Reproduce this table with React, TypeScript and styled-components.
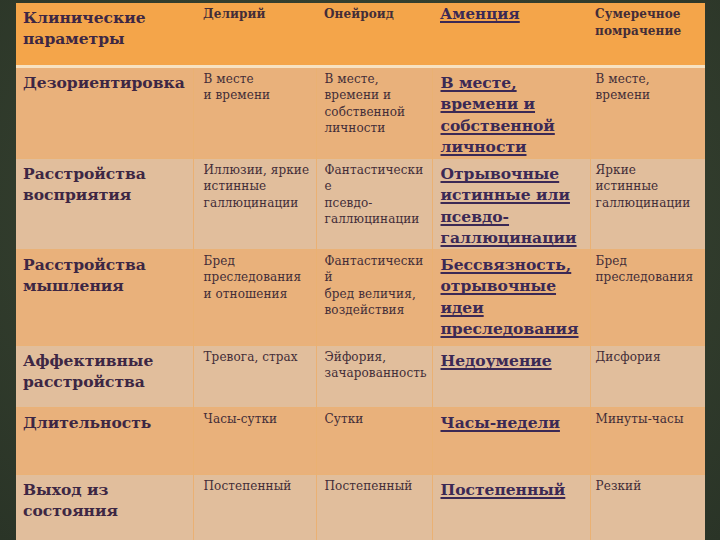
import { Fragment } from "react";
import { createGlobalStyle, styled } from "styled-components";

const GlobalStyle = createGlobalStyle`
  html, body {
    margin: 0;
    padding: 0;
  }
  body {
    width: 720px;
    height: 540px;
    overflow: hidden;
    background: radial-gradient(ellipse at 50% 40%, #3b4634 0%, #323d2d 60%, #2a3427 100%);
  }
`;

const Page = styled.div`
  width: 720px;
  height: 540px;
  box-sizing: border-box;
  padding: 3px 15px 0 16px;
  overflow: hidden;
`;

const Table = styled.table`
  width: 689px;
  table-layout: fixed;
  border-collapse: collapse;
  border-spacing: 0;
  font-family: "DejaVu Serif", "Liberation Serif", serif;
`;

const HeaderRow = styled.tr`
  height: 63px;
  background: #f4a54a;
  border-bottom: 3px solid #f7e2c2;
`;

const Row = styled.tr<{ $tone: "orange" | "beige"; $h: number }>`
  height: ${(p) => p.$h}px;
  background: ${(p) => (p.$tone === "orange" ? "#e9b17b" : "#e1be9c")};
  border-top: 1px solid #eab277;
`;

const Cell = styled.td<{ $kind: "param" | "plain" | "accent"; $pl: number; $head?: boolean }>`
  vertical-align: top;
  box-sizing: border-box;
  padding: ${(p) => (p.$kind === "plain" ? "3px" : "4px")} 2px 0 ${(p) => p.$pl}px;
  border-left: ${(p) => (p.$head ? "none" : "1px solid #eab173")};
  white-space: nowrap;
  overflow: hidden;
  color: ${(p) => (p.$kind === "accent" ? "#3b2955" : p.$kind === "param" ? "#3d2744" : "#432d38")};
  font-size: ${(p) => (p.$kind === "plain" ? "12px" : p.$kind === "param" ? "15.5px" : "15.5px")};
  font-weight: ${(p) => (p.$kind === "plain" ? (p.$head ? 600 : 400) : 700)};
  line-height: ${(p) => (p.$kind === "plain" ? "16.5px" : p.$kind === "param" ? "21px" : "21.5px")};
  text-decoration: ${(p) => (p.$kind === "accent" ? "underline" : "none")};
  text-decoration-thickness: 2px;
  text-underline-offset: 2px;
  text-decoration-skip-ink: none;
  letter-spacing: ${(p) => (p.$kind === "plain" ? "0.1px" : "0")};

  &:first-child {
    border-left: none;
  }
`;

const HeadAccent = styled.span`
  font-size: 15px;
  font-weight: 700;
  text-decoration: underline;
  text-decoration-thickness: 1.5px;
  text-underline-offset: 2px;
  text-decoration-skip-ink: none;
  color: #3b2955;
`;

const widths = [177, 123, 116, 158, 115];
const pads = [7, 10, 8, 8, 5];

type Line = string[];

const rows: { h: number; tone: "orange" | "beige"; cells: Line[] }[] = [
  {
    h: 92,
    tone: "orange",
    cells: [
      ["Дезориентировка"],
      ["В месте", "и времени"],
      ["В месте,", "времени и", "собственной", "личности"],
      ["В месте,", "времени и", "собственной", "личности"],
      ["В месте,", "времени"],
    ],
  },
  {
    h: 91,
    tone: "beige",
    cells: [
      ["Расстройства", "восприятия"],
      ["Иллюзии, яркие", "истинные", "галлюцинации"],
      ["Фантастически", "е", "псевдо-", "галлюцинации"],
      ["Отрывочные", "истинные или", "псевдо-", "галлюцинации"],
      ["Яркие", "истинные", "галлюцинации"],
    ],
  },
  {
    h: 96,
    tone: "orange",
    cells: [
      ["Расстройства", "мышления"],
      ["Бред", "преследования", "и отношения"],
      ["Фантастически", "й", "бред величия,", "воздействия"],
      ["Бессвязность,", "отрывочные", "идеи", "преследования"],
      ["Бред", "преследования"],
    ],
  },
  {
    h: 62,
    tone: "beige",
    cells: [
      ["Аффективные", "расстройства"],
      ["Тревога, страх"],
      ["Эйфория,", "зачарованность"],
      ["Недоумение"],
      ["Дисфория"],
    ],
  },
  {
    h: 67,
    tone: "orange",
    cells: [["Длительность"], ["Часы-сутки"], ["Сутки"], ["Часы-недели"], ["Минуты-часы"]],
  },
  {
    h: 70,
    tone: "beige",
    cells: [["Выход из", "состояния"], ["Постепенный"], ["Постепенный"], ["Постепенный"], ["Резкий"]],
  },
];

function Lines({ lines }: { lines: Line }) {
  return (
    <>
      {lines.map((l, i) => (
        <Fragment key={i}>
          {i > 0 && <br />}
          {l}
        </Fragment>
      ))}
    </>
  );
}

const kindFor = (col: number): "param" | "plain" | "accent" =>
  col === 0 ? "param" : col === 3 ? "accent" : "plain";

export default function App() {
  return (
    <>
      <GlobalStyle />
      <Page>
        <Table>
          <colgroup>
            {widths.map((w, i) => (
              <col key={i} style={{ width: w }} />
            ))}
          </colgroup>
          <tbody>
            <HeaderRow>
              <Cell $kind="param" $pl={pads[0]} $head>
                Клинические
                <br />
                параметры
              </Cell>
              <Cell $kind="plain" $pl={pads[1]} $head>
                Делирий
              </Cell>
              <Cell $kind="plain" $pl={pads[2]} $head>
                Онейроид
              </Cell>
              <Cell $kind="plain" $pl={pads[3]} $head>
                <HeadAccent>Аменция</HeadAccent>
              </Cell>
              <Cell $kind="plain" $pl={pads[4]} $head>
                Сумеречное
                <br />
                помрачение
              </Cell>
            </HeaderRow>
            {rows.map((r, ri) => (
              <Row key={ri} $tone={r.tone} $h={r.h}>
                {r.cells.map((c, ci) => (
                  <Cell key={ci} $kind={kindFor(ci)} $pl={pads[ci]}>
                    <Lines lines={c} />
                  </Cell>
                ))}
              </Row>
            ))}
          </tbody>
        </Table>
      </Page>
    </>
  );
}
